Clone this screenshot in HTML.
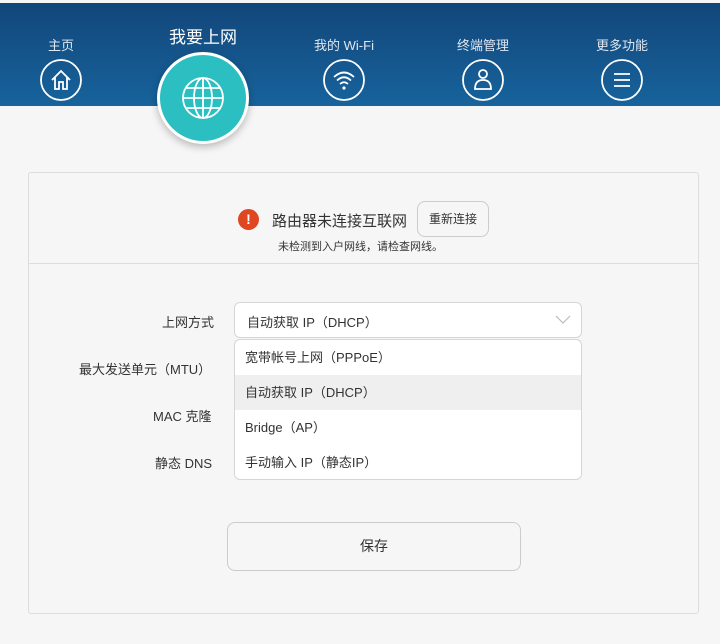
<!DOCTYPE html>
<html><head><meta charset="utf-8"><style>
*{margin:0;padding:0;box-sizing:border-box}
body{width:720px;height:644px;background:#f6f6f6;font-family:"Liberation Sans","Noto Sans CJK SC",sans-serif;position:relative;overflow:hidden;color:#333}
.hdr{position:absolute;left:0;top:3px;width:720px;height:103px;background:linear-gradient(180deg,#12467a,#17639c)}
.lbl{position:absolute;color:#dfe8f2;font-size:13px;text-align:center;width:120px;top:35px}
.ic{position:absolute;top:59px}
.big{position:absolute;left:157px;top:52px;width:92px;height:92px;border-radius:50%;background:#2bbfc1;border:3px solid #fff;box-shadow:0 3px 8px rgba(0,0,0,.25)}
.card{position:absolute;left:28px;top:172px;width:671px;height:442px;border:1px solid #ddd;border-radius:3px;background:#f6f6f6}
.t{position:absolute;font-size:13px;color:#333}
.sel{position:absolute;left:234px;top:302px;width:348px;height:36px;border:1px solid #d6d6d6;border-radius:6px;background:#fff}
.dd{position:absolute;left:234px;top:339px;width:348px;height:141px;border:1px solid #d6d6d6;border-radius:6px;background:#fff;overflow:hidden}
.dd div{height:35px;line-height:35px;padding-left:10px;font-size:13px;color:#333}
</style></head><body>
<div class="hdr"></div>
<div class="lbl" style="left:1px">主页</div>
<div class="lbl" style="left:143px;top:23px;font-size:17px;color:#fff">我要上网</div>
<div class="lbl" style="left:284px">我的 Wi-Fi</div>
<div class="lbl" style="left:423px">终端管理</div>
<div class="lbl" style="left:562px">更多功能</div>
<svg class="ic" style="left:40px" width="42" height="42" viewBox="0 0 42 42" fill="none" stroke="#fff" stroke-width="1.8"><circle cx="21" cy="21" r="20"/><path d="M12 21 L21 12 L30 21 M15 18 V30 H19 V23 H23 V30 H27 V18"/></svg>
<svg class="ic" style="left:323px" width="42" height="42" viewBox="0 0 42 42" fill="none" stroke="#fff" stroke-width="1.8"><circle cx="21" cy="21" r="20"/><path d="M11 18 Q21 9 31 18 M14 21.5 Q21 15 28 21.5 M17 25 Q21 21.5 25 25"/><circle cx="21" cy="29" r="1.6" fill="#fff" stroke="none"/></svg>
<svg class="ic" style="left:462px" width="42" height="42" viewBox="0 0 42 42" fill="none" stroke="#fff" stroke-width="1.8"><circle cx="21" cy="21" r="20"/><circle cx="21" cy="15" r="4"/><path d="M13 30 Q13 21 21 21 Q29 21 29 30 Z"/></svg>
<svg class="ic" style="left:601px" width="42" height="42" viewBox="0 0 42 42" fill="none" stroke="#fff" stroke-width="1.8"><circle cx="21" cy="21" r="20"/><path d="M13 15 H29 M13 21 H29 M13 27 H29"/></svg>
<div class="big"><svg width="86" height="86" viewBox="0 0 86 86" fill="none" stroke="#fff" stroke-width="1.8"><circle cx="43" cy="43" r="20"/><ellipse cx="43" cy="43" rx="9" ry="20"/><path d="M43 23 V63 M23 43 H63 M26 33 H60 M26 53 H60"/></svg></div>
<div class="card">
<div style="position:absolute;left:0;top:90px;width:669px;height:1px;background:#ddd"></div>
</div>
<div style="position:absolute;left:238px;top:209px;width:21px;height:21px;border-radius:50%;background:#e0461f;color:#fff;font-size:14px;font-weight:bold;text-align:center;line-height:21px">!</div>
<div class="t" style="left:272px;top:210px;font-size:15px">路由器未连接互联网</div>
<div style="position:absolute;left:417px;top:201px;width:72px;height:36px;border:1px solid #ccc;border-radius:8px;font-size:12px;text-align:center;line-height:34px;color:#333">重新连接</div>
<div class="t" style="left:278px;top:238px;font-size:11px">未检测到入户网线，请检查网线。</div>
<div class="t" style="left:162px;top:312px">上网方式</div>
<div class="t" style="left:79px;top:359px">最大发送单元（MTU）</div>
<div class="t" style="left:153px;top:406px">MAC 克隆</div>
<div class="t" style="left:155px;top:453px">静态 DNS</div>
<div class="sel"><span style="position:absolute;left:12px;top:9px;font-size:13px">自动获取 IP（DHCP）</span>
<svg style="position:absolute;right:10px;top:12px" width="16" height="10" viewBox="0 0 16 10" fill="none" stroke="#bbb" stroke-width="1.2"><path d="M1 1 L8 8 L15 1"/></svg></div>
<div class="dd"><div>宽带帐号上网（PPPoE）</div><div style="background:#efefef">自动获取 IP（DHCP）</div><div>Bridge（AP）</div><div>手动输入 IP（静态IP）</div></div>
<div style="position:absolute;left:227px;top:522px;width:294px;height:49px;border:1px solid #ccc;border-radius:8px;text-align:center;line-height:47px;font-size:14px">保存</div>
</body></html>
